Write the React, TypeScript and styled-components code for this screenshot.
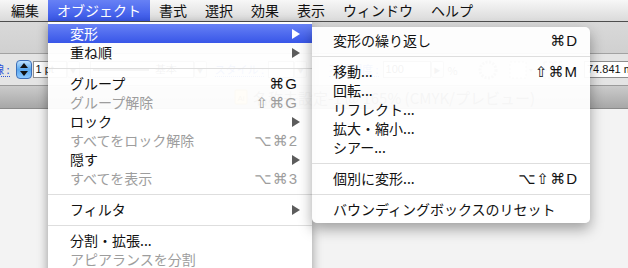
import React from 'react';
import styled, { createGlobalStyle, css } from 'styled-components';

const GlobalStyle = createGlobalStyle`
  html, body {
    margin: 0;
    padding: 0;
    background: #f2f2f2;
  }
  body {
    font-family: "Noto Sans CJK JP", "Noto Sans", sans-serif;
  }
`;

const highlight = css`
  background: linear-gradient(#6781f5, #3856e8);
  color: #fff;
`;

const Screen = styled.div`
  position: relative;
  width: 628px;
  height: 268px;
  overflow: hidden;
  display: flex;
  flex-direction: column;
  background: #f3f3f3;
`;

const MenuBar = styled.div`
  display: flex;
  height: 21px;
  padding-left: 2px;
  border-bottom: 1px solid #4e4e4e;
  background: linear-gradient(#f7f7f7, #dadada);
  font-size: 14px;
  line-height: 21px;
`;

const MenuTitle = styled.div<{ $active?: boolean }>`
  padding: 0 9px;
  color: #111;
  ${({ $active }) => $active && highlight}
`;

const Toolbar = styled.div`
  height: 31px;
  background: linear-gradient(#d9d9d9, #d0d0d0);
  border-bottom: 1px solid #a2a2a2;
`;

const ControlBar = styled.div`
  display: flex;
  align-items: center;
  height: 31px;
  background: #e4e4e4;
  border-bottom: 1px solid #9b9b9b;
  font-size: 11px;
  font-family: "Noto Sans CJK JP", sans-serif;
`;

const FieldLabel = styled.span<{ $ml?: number }>`
  margin-left: ${({ $ml }) => $ml ?? 8}px;
  color: #2d55d8;
  border-bottom: 1px dotted #2d55d8;
  line-height: 13px;
  white-space: nowrap;
`;

const Stepper = styled.div`
  display: flex;
  align-items: center;
  justify-content: center;
  width: 14px;
  height: 17px;
  margin-left: 6px;
  border: 1px solid #3d6fb8;
  border-radius: 4px;
  background: linear-gradient(#bfe2ff, #5aa7ee 50%, #8cc8ff);
`;

const Field = styled.div<{ $w: number; $ml?: number }>`
  width: ${({ $w }) => $w}px;
  height: 15px;
  margin-left: ${({ $ml }) => $ml ?? 1}px;
  padding-left: 2px;
  border: 1px solid #8e8e8e;
  background: #fff;
  font-family: "Liberation Sans", sans-serif;
  font-size: 11px;
  line-height: 15px;
  color: #111;
  white-space: nowrap;
  overflow: hidden;
  display: flex;
  align-items: center;
  gap: 6px;
`;

const DropBtn = styled.div`
  width: 11px;
  height: 15px;
  border: 1px solid #9c9c9c;
  border-radius: 2px;
  background: linear-gradient(#fafafa, #dcdcdc);
  display: flex;
  align-items: center;
  justify-content: center;
  font-size: 7px;
  color: #333;
`;

const StrokeLine = styled.div`
  width: 56px;
  height: 2px;
  background: #555;
`;

const Unit = styled.span`
  margin-left: 4px;
  color: #333;
`;

const ToolIcon = styled.div<{ $ml: number }>`
  margin-left: ${({ $ml }) => $ml}px;
  display: flex;
`;

const CoordBox = styled.div`
  flex-shrink: 0;
  margin-left: auto;
  margin-right: -14px;
  width: 54px;
  height: 15px;
  padding-left: 2px;
  border: 1px solid #8e8e8e;
  background: #fff;
  font-family: "Liberation Sans", sans-serif;
  font-size: 11px;
  line-height: 15px;
  color: #111;
  white-space: nowrap;
`;

const DocBar = styled.div`
  display: flex;
  align-items: center;
  height: 22px;
  padding-left: 234px;
  background: linear-gradient(#cbcbcb, #a7a7a7);
  border-bottom: 1px solid #8a8a8a;
`;

const DocTitle = styled.span`
  margin-left: 5px;
  font-size: 15px;
  color: #3a3a3a;
  white-space: nowrap;
`;

const Canvas = styled.div`
  flex: 1;
  background: #f3f3f3;
`;

const Menu = styled.div<{ $left: number; $top: number; $width: number; $sub?: boolean }>`
  position: absolute;
  left: ${({ $left }) => $left}px;
  top: ${({ $top }) => $top}px;
  width: ${({ $width }) => $width}px;
  padding: ${({ $sub }) => ($sub ? '4px 0' : '2px 0 20px')};
  background: rgba(255, 255, 255, 0.95);
  border-radius: ${({ $sub }) => ($sub ? '0 5px 5px 5px' : '0')};
  box-shadow: ${({ $sub }) =>
    $sub ? '0 6px 14px rgba(0, 0, 0, 0.35)' : '0 3px 10px rgba(0, 0, 0, 0.38)'};
  font-size: 14px;
`;

const Item = styled.div<{ $disabled?: boolean; $active?: boolean; $sub?: boolean }>`
  display: flex;
  align-items: center;
  height: 19px;
  line-height: 19px;
  padding: ${({ $sub }) => ($sub ? '0 13px 0 21px' : '0 12px 0 22px')};
  color: ${({ $disabled }) => ($disabled ? '#9d9d9d' : '#111')};
  white-space: nowrap;
  ${({ $active }) => $active && highlight}
`;

const ItemLabel = styled.span`
  flex: 1;
`;

const Shortcut = styled.span<{ $sub?: boolean }>`
  margin-right: ${({ $sub }) => ($sub ? -1 : 2)}px;
  font-family: "Liberation Sans", "DejaVu Sans", sans-serif;
  font-size: 15px;
  letter-spacing: 1px;
`;

const Separator = styled.div`
  height: 1px;
  margin: 6px 0 5px;
  background: #dedede;
`;

const Arrow = ({ active }: { active?: boolean }) => (
  <svg width="8" height="10" viewBox="0 0 8 10">
    <polygon points="0,0 8,5 0,10" fill={active ? '#fff' : '#5c5c5c'} />
  </svg>
);

type Entry =
  | { sep: true }
  | { label: string; key?: string; sub?: boolean; disabled?: boolean; active?: boolean };

const objectMenu: Entry[] = [
  { label: '変形', sub: true, active: true },
  { label: '重ね順', sub: true },
  { sep: true },
  { label: 'グループ', key: '⌘G' },
  { label: 'グループ解除', key: '⇧⌘G', disabled: true },
  { label: 'ロック', sub: true },
  { label: 'すべてをロック解除', key: '⌥⌘2', disabled: true },
  { label: '隠す', sub: true },
  { label: 'すべてを表示', key: '⌥⌘3', disabled: true },
  { sep: true },
  { label: 'フィルタ', sub: true },
  { sep: true },
  { label: '分割・拡張...' },
  { label: 'アピアランスを分割', disabled: true },
];

const transformMenu: Entry[] = [
  { label: '変形の繰り返し', key: '⌘D' },
  { sep: true },
  { label: '移動...', key: '⇧⌘M' },
  { label: '回転...' },
  { label: 'リフレクト...' },
  { label: '拡大・縮小...' },
  { label: 'シアー...' },
  { sep: true },
  { label: '個別に変形...', key: '⌥⇧⌘D' },
  { sep: true },
  { label: 'バウンディングボックスのリセット' },
];

const MenuItems = ({ entries, sub }: { entries: Entry[]; sub?: boolean }) => (
  <>
    {entries.map((e, idx) =>
      'sep' in e ? (
        <Separator key={idx} />
      ) : (
        <Item key={idx} $disabled={e.disabled} $active={e.active} $sub={sub}>
          <ItemLabel>{e.label}</ItemLabel>
          {e.key && <Shortcut $sub={sub}>{e.key}</Shortcut>}
          {e.sub && <Arrow active={e.active} />}
        </Item>
      )
    )}
  </>
);

const titles = ['編集', 'オブジェクト', '書式', '選択', '効果', '表示', 'ウィンドウ', 'ヘルプ'];

const App = () => {
  return (
    <Screen>
      <GlobalStyle />
      <MenuBar>
        {titles.map((t) => (
          <MenuTitle key={t} $active={t === 'オブジェクト'}>
            {t}
          </MenuTitle>
        ))}
      </MenuBar>
      <Toolbar />
      <ControlBar>
        <FieldLabel $ml={-7}>線 :</FieldLabel>
        <Stepper>
          <svg width="8" height="13" viewBox="0 0 8 13">
            <polygon points="4,0 8,5 0,5" fill="#111" />
            <polygon points="0,8 8,8 4,13" fill="#111" />
          </svg>
        </Stepper>
        <Field $w={30}>1 pt</Field>
        <DropBtn>▼</DropBtn>
        <Field $w={100} $ml={10}>
          <StrokeLine />
          <span>基本</span>
        </Field>
        <DropBtn>▼</DropBtn>
        <FieldLabel>スタイル :</FieldLabel>
        <Field $w={22} $ml={4} />
        <DropBtn>▼</DropBtn>
        <FieldLabel $ml={22}>不透明度 :</FieldLabel>
        <Field $w={44} $ml={4}>100</Field>
        <DropBtn>▶</DropBtn>
        <Unit>%</Unit>
        <ToolIcon $ml={20}>
          <svg width="20" height="20" viewBox="0 0 20 20">
            <circle cx="10" cy="10" r="8" fill="none" stroke="#999" strokeWidth="3" strokeDasharray="2 1.5" />
          </svg>
        </ToolIcon>
        <ToolIcon $ml={10}>
          <svg width="26" height="20" viewBox="0 0 26 20">
            <rect x="2" y="2" width="16" height="16" fill="#fff" stroke="#aaa" strokeDasharray="2 2" />
            <polygon points="21,9 25,9 23,12" fill="#777" />
          </svg>
        </ToolIcon>
        <ToolIcon $ml={8}>
          <svg width="22" height="20" viewBox="0 0 22 20">
            <rect x="2" y="2" width="18" height="16" fill="none" stroke="#888" strokeDasharray="3 2" />
            <line x1="11" y1="2" x2="11" y2="18" stroke="#888" strokeDasharray="3 2" />
            <line x1="2" y1="10" x2="20" y2="10" stroke="#888" strokeDasharray="3 2" />
          </svg>
        </ToolIcon>
        <CoordBox>74.841 mm</CoordBox>
      </ControlBar>
      <DocBar>
        <svg width="14" height="16" viewBox="0 0 14 16">
          <rect x="1" y="1" width="12" height="14" rx="1" fill="#f3d27a" stroke="#b8902c" />
          <text x="7" y="12" fontSize="8" textAnchor="middle" fill="#8a6414" fontFamily="Liberation Sans">Ai</text>
        </svg>
        <DocTitle>名称未設定-1 @ 165% (CMYK/プレビュー)</DocTitle>
      </DocBar>
      <Canvas />

      <Menu $left={48} $top={22} $width={264}>
        <MenuItems entries={objectMenu} />
      </Menu>
      <Menu $left={312} $top={27} $width={278} $sub>
        <MenuItems entries={transformMenu} sub />
      </Menu>
    </Screen>
  );
};

export default App;
